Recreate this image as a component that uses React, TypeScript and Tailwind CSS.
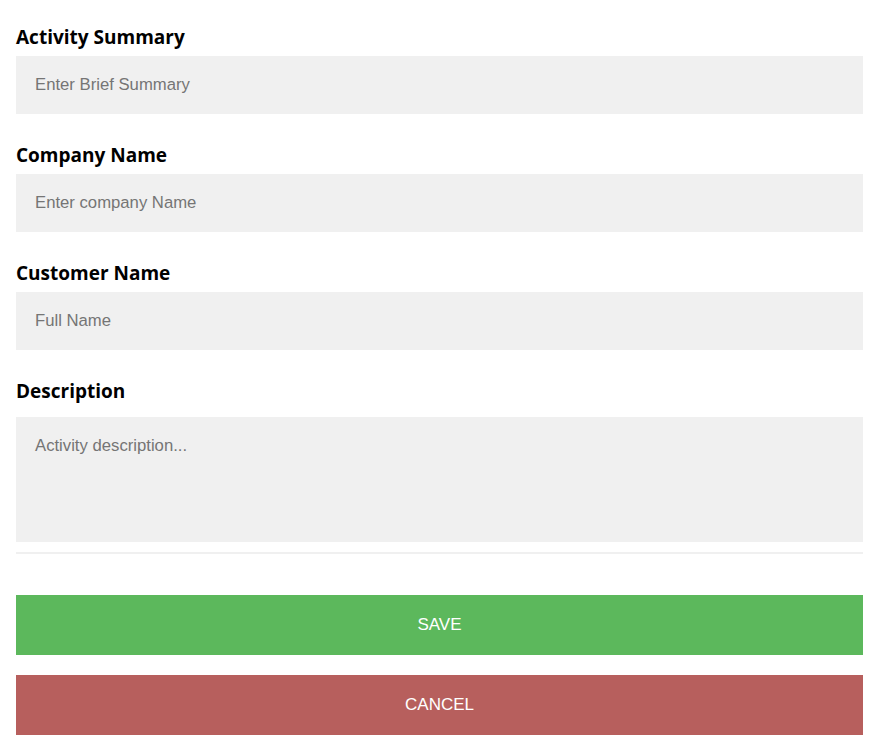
import React from 'react';

const labelCls = "block h-6 mb-[7px] text-[19px] leading-6 font-bold text-black [font-family:'Open_Sans',sans-serif]";
const fieldCls =
  "block w-full bg-[#f0f0f0] px-[19px] text-[16.7px] text-black placeholder:text-[#757575] outline-none [font-family:'Liberation_Sans',Arial,sans-serif]";

export default function App() {
  return (
    <div className="min-h-screen bg-white pl-4 pr-[13px] pt-[25px] pb-4">
      <form onSubmit={(e) => e.preventDefault()}>
        <label className={labelCls}>Activity Summary</label>
        <input type="text" placeholder="Enter Brief Summary" className={`${fieldCls} h-[58px]`} />

        <label className={`${labelCls} mt-[29px]`}>Company Name</label>
        <input type="text" placeholder="Enter company Name" className={`${fieldCls} h-[58px]`} />

        <label className={`${labelCls} mt-[29px]`}>Customer Name</label>
        <input type="text" placeholder="Full Name" className={`${fieldCls} h-[58px]`} />

        <label className={`${labelCls} mt-[29px] !mb-[14px]`}>Description</label>
        <textarea
          placeholder="Activity description..."
          className={`${fieldCls} h-[125px] pt-[16px] resize-none`}
        />

        <div className="mt-[10px] h-[2px] bg-[#f0f0f0]" />

        <button
          type="submit"
          className="mt-[41px] block w-full h-[60px] bg-[#5cb85c] text-white text-[17px] uppercase [font-family:'Liberation_Sans',Arial,sans-serif]"
        >
          Save
        </button>
        <button
          type="button"
          className="mt-5 block w-full h-[60px] bg-[#b75f5d] text-white text-[17px] uppercase [font-family:'Liberation_Sans',Arial,sans-serif]"
        >
          Cancel
        </button>
      </form>
    </div>
  );
}
